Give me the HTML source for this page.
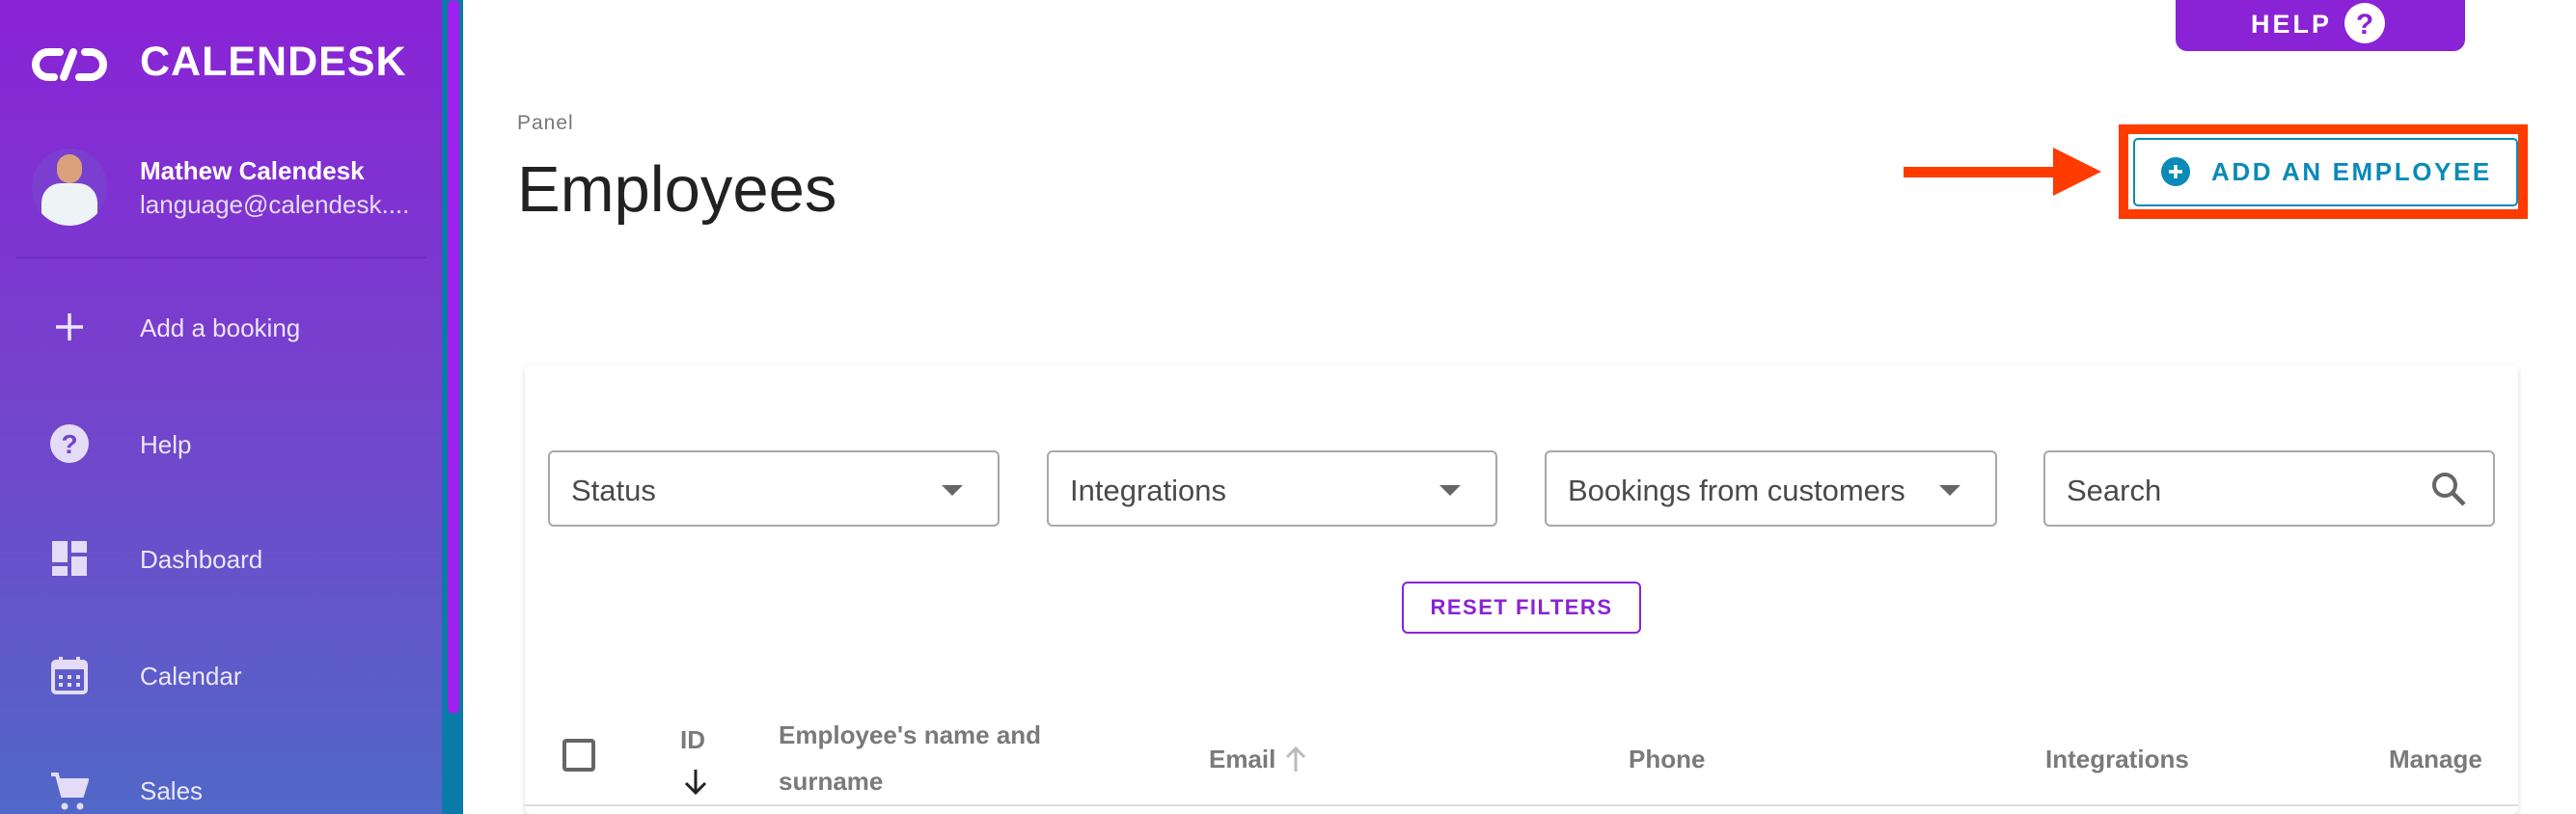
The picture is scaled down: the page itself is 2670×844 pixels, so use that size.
<!DOCTYPE html>
<html><head><meta charset="utf-8"><style>
*{margin:0;padding:0;box-sizing:border-box}
html,body{width:2670px;height:844px;overflow:hidden}
body{background:#fff;font-family:"Liberation Sans",sans-serif;position:relative}
.abs{position:absolute}
#sb{left:0;top:0;width:460px;height:844px;background:linear-gradient(180deg,#8a22d6 0%,#7444cc 50%,#5168c8 100%)}
.strip{left:458px;top:0;width:22px;height:844px;background:#0a7aa8}
.strip2{left:464px;top:0;width:12px;height:740px;background:#a020f0;border-radius:6px}
.nav{color:#ece6fa;font-size:26px;left:145px}
.ic{left:52px;width:40px;height:40px}
.fld{border:2px solid #a8a8a8;border-radius:6px;height:79px;top:467px;font-size:31px;color:#4a4a4a;padding:22px 0 0 22px}
.tri{position:absolute;right:36px;top:34px;width:0;height:0;border-left:11px solid transparent;border-right:11px solid transparent;border-top:11px solid #666}
.th{font-size:26px;font-weight:bold;color:#7a7a7a}
</style></head><body>
<div id="sb" class="abs"></div>
<div class="abs strip"></div><div class="abs strip2"></div>
<svg class="abs" style="left:32px;top:48px" width="80" height="38" viewBox="0 0 80 38"><path d="M30 6H18a13 13 0 0 0 0 26h6M50 32h12a13 13 0 0 0 0-26h-6M44 6L34 32" fill="none" stroke="#fff" stroke-width="8" stroke-linecap="round"/></svg>
<div class="abs" style="left:145px;top:40px;color:#fff;font-size:43px;font-weight:bold;letter-spacing:1px">CALENDESK</div>
<div class="abs" style="left:33px;top:154px;width:78px;height:80px;border-radius:40px;overflow:hidden;background:#7a3fd0">
<div class="abs" style="left:26px;top:6px;width:26px;height:30px;border-radius:13px;background:#d9a27c"></div>
<div class="abs" style="left:10px;top:36px;width:58px;height:50px;border-radius:20px 20px 0 0;background:#eef3f6"></div></div>
<div class="abs" style="left:145px;top:162px;color:#fff;font-size:26px;font-weight:bold">Mathew Calendesk</div>
<div class="abs" style="left:145px;top:197px;color:#e4dcf6;font-size:26px">language@calendesk....</div>
<div class="abs" style="left:16px;top:266px;width:426px;height:2px;background:#6d2fc0"></div>
<div class="abs nav" style="top:325px">Add a booking</div>
<div class="abs nav" style="top:446px">Help</div>
<div class="abs nav" style="top:565px">Dashboard</div>
<div class="abs nav" style="top:686px">Calendar</div>
<div class="abs nav" style="top:805px">Sales</div>
<svg class="abs ic" style="top:319px" viewBox="0 0 40 40"><path d="M20 6v28M6 20h28" stroke="#ece6fa" stroke-width="3.5"/></svg>
<svg class="abs ic" style="top:440px" viewBox="0 0 40 40"><circle cx="20" cy="20" r="20" fill="#e4dcf6"/><text x="20" y="30" text-anchor="middle" font-size="28" font-weight="bold" fill="#7444cc" font-family="Liberation Sans">?</text></svg>
<svg class="abs ic" style="top:559px" viewBox="0 0 40 40"><path d="M2 2h16v22H2zM22 2h16v12H22zM22 18h16v20H22zM2 28h16v10H2z" fill="#e4dcf6"/></svg>
<svg class="abs ic" style="top:680px" viewBox="0 0 40 40"><rect x="3" y="6" width="34" height="32" rx="3" fill="none" stroke="#e4dcf6" stroke-width="4"/><rect x="3" y="6" width="34" height="8" fill="#e4dcf6"/><path d="M11 1v8M29 1v8" stroke="#e4dcf6" stroke-width="4"/><g fill="#e4dcf6"><rect x="9" y="20" width="4" height="4"/><rect x="18" y="20" width="4" height="4"/><rect x="27" y="20" width="4" height="4"/><rect x="9" y="28" width="4" height="4"/><rect x="18" y="28" width="4" height="4"/><rect x="27" y="28" width="4" height="4"/></g></svg>
<svg class="abs ic" style="top:800px" viewBox="0 0 40 40"><path d="M1 3h6l6 22h20l5-16H10" fill="none" stroke="#e4dcf6" stroke-width="4"/><path d="M11 10h26l-4 13H14z" fill="#e4dcf6"/><circle cx="15" cy="36" r="3.5" fill="#e4dcf6"/><circle cx="31" cy="36" r="3.5" fill="#e4dcf6"/></svg>

<div class="abs" style="left:2255px;top:0;width:300px;height:53px;background:#8a22d6;border-radius:0 0 12px 12px"></div>
<div class="abs" style="left:2333px;top:10px;color:#fff;font-size:27px;font-weight:bold;letter-spacing:3px">HELP</div>
<svg class="abs" style="left:2430px;top:3px" width="42" height="42" viewBox="0 0 42 42"><circle cx="21" cy="21" r="21" fill="#fff"/><text x="21" y="32" text-anchor="middle" font-size="30" font-weight="bold" fill="#8a22d6" font-family="Liberation Sans">?</text></svg>

<div class="abs" style="left:536px;top:116px;color:#777;font-size:21px;letter-spacing:1px">Panel</div>
<div class="abs" style="left:536px;top:158px;color:#222;font-size:67px">Employees</div>

<div class="abs" style="left:1973px;top:173px;width:156px;height:11px;background:#ff3b00"></div>
<div class="abs" style="left:2128px;top:153px;width:0;height:0;border-top:25px solid transparent;border-bottom:25px solid transparent;border-left:50px solid #ff3b00"></div>
<div class="abs" style="left:2196px;top:129px;width:424px;height:98px;border:10px solid #ff3b00"></div>
<div class="abs" style="left:2211px;top:143px;width:399px;height:71px;border:2px solid #0a8ab8;border-radius:5px"></div>
<svg class="abs" style="left:2240px;top:163px" width="30" height="30" viewBox="0 0 30 30"><circle cx="15" cy="15" r="15" fill="#0a8ab8"/><path d="M15 8v14M8 15h14" stroke="#fff" stroke-width="3.5"/></svg>
<div class="abs" style="left:2292px;top:163px;color:#0a8ab8;font-size:26px;font-weight:bold;letter-spacing:2.6px">ADD AN EMPLOYEE</div>

<div class="abs" style="left:544px;top:378px;width:2066px;height:466px;background:#fff;border-radius:6px;box-shadow:0 2px 6px rgba(0,0,0,.15)"></div>
<div class="abs fld" style="left:568px;width:468px">Status<div class="tri"></div></div>
<div class="abs fld" style="left:1085px;width:467px">Integrations<div class="tri"></div></div>
<div class="abs fld" style="left:1601px;width:469px">Bookings from customers<div class="tri"></div></div>
<div class="abs fld" style="left:2118px;width:468px">Search
<svg style="position:absolute;right:26px;top:18px" width="40" height="40" viewBox="0 0 40 40"><circle cx="16" cy="16" r="11" fill="none" stroke="#666" stroke-width="4"/><path d="M24 24l12 12" stroke="#666" stroke-width="4.5"/></svg></div>
<div class="abs" style="left:1453px;top:603px;width:248px;height:54px;border:2px solid #8a22d6;border-radius:6px;color:#8a22d6;font-size:22px;font-weight:bold;letter-spacing:1.5px;text-align:center;line-height:50px">RESET FILTERS</div>

<div class="abs" style="left:583px;top:766px;width:34px;height:34px;border:4px solid #666;border-radius:4px"></div>
<div class="abs th" style="left:705px;top:752px">ID</div>
<svg class="abs" style="left:708px;top:796px" width="26" height="30" viewBox="0 0 26 30"><path d="M13 2v24M3 16l10 10 10-10" fill="none" stroke="#222" stroke-width="3"/></svg>
<div class="abs th" style="left:807px;top:747px">Employee's name and</div>
<div class="abs th" style="left:807px;top:795px">surname</div>
<div class="abs th" style="left:1253px;top:772px">Email</div>
<svg class="abs" style="left:1331px;top:772px" width="24" height="30" viewBox="0 0 24 30"><path d="M12 28V4M3 13l9-9 9 9" fill="none" stroke="#bbb" stroke-width="3"/></svg>
<div class="abs th" style="left:1688px;top:772px">Phone</div>
<div class="abs th" style="left:2120px;top:772px">Integrations</div>
<div class="abs th" style="left:2476px;top:772px">Manage</div>
<div class="abs" style="left:544px;top:834px;width:2066px;height:2px;background:#ddd"></div>
</body></html>
